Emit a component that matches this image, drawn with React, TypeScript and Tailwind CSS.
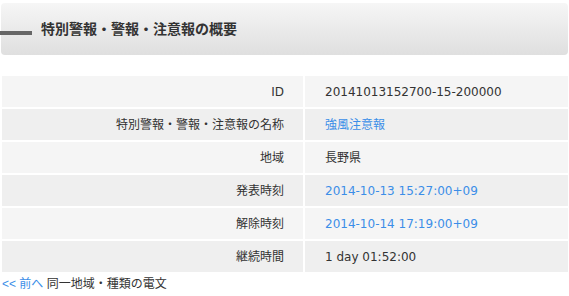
const rows = [
  { label: 'ID', value: '20141013152700-15-200000', link: false },
  { label: '特別警報・警報・注意報の名称', value: '強風注意報', link: true },
  { label: '地域', value: '長野県', link: false },
  { label: '発表時刻', value: '2014-10-13 15:27:00+09', link: true },
  { label: '解除時刻', value: '2014-10-14 17:19:00+09', link: true },
  { label: '継続時間', value: '1 day 01:52:00', link: false },
]

export default function App() {
  return (
    <div
      className="w-[569px] h-[296px] bg-white text-[#333] text-[12px] overflow-hidden"
      style={{ fontFamily: '"DejaVu Sans", "Noto Sans CJK JP", sans-serif' }}
    >
      <div className="pt-[3px] pl-[1px] pr-[1px]">
        <div className="relative h-[52px] rounded-[4px] bg-gradient-to-b from-[#f6f6f6] to-[#dfdfdf] flex items-center">
          <div className="absolute left-[-1px] top-[28px] w-[32px] h-[4px] bg-[#666]" />
          <h1 className="pl-[40px] text-[14px] font-bold text-[#333] leading-none">
            特別警報・警報・注意報の概要
          </h1>
        </div>
      </div>

      <div className="mt-[21px] ml-[2px] mr-[1px] flex flex-col gap-[2px]">
        {rows.map((r, i) => (
          <div
            key={r.label}
            className={`flex h-[31px] ${i % 2 === 0 ? 'bg-[#f5f5f5]' : 'bg-[#efefef]'}`}
          >
            <div className="w-[301px] flex items-center justify-end pr-[19px]">{r.label}</div>
            <div className="w-[2px] bg-white" />
            <div className="flex-1 flex items-center pl-[20px]">
              {r.link ? <a className="text-[#3b8ee8]">{r.value}</a> : r.value}
            </div>
          </div>
        ))}
      </div>

      <div
        className="pl-[2px] pt-[4px] leading-[16px] text-[12px]"
        style={{ fontFamily: '"Liberation Sans", "Noto Sans CJK JP", sans-serif' }}
      >
        <a className="text-[#3b8ee8]">&lt;&lt; 前へ</a> 同一地域・種類の電文
      </div>
    </div>
  )
}
